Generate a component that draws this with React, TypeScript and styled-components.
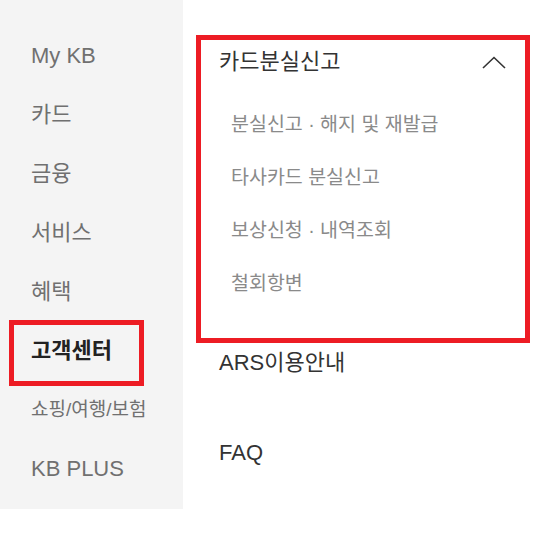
import styled, { createGlobalStyle } from 'styled-components';

const GlobalStyle = createGlobalStyle`
  html, body {
    margin: 0;
    padding: 0;
    background: #ffffff;
  }
  body {
    font-family: "Liberation Sans", "Noto Sans CJK KR", sans-serif;
    line-height: 1;
  }
`;

const ANNOTATION = '#ed1c24';

const Page = styled.div`
  display: flex;
  align-items: flex-start;
  width: 547px;
`;

const Sidebar = styled.nav`
  width: 183px;
  height: 509px;
  box-sizing: border-box;
  padding-top: 26px;
  background: #f4f4f4;
  display: flex;
  flex-direction: column;
`;

const SideItem = styled.div<{ $active?: boolean; $small?: boolean }>`
  position: relative;
  height: 59px;
  display: flex;
  align-items: center;
  padding-left: 31px;
  font-size: ${(p) => (p.$small ? '19px' : '22px')};
  font-weight: ${(p) => (p.$active ? 700 : 400)};
  color: ${(p) => (p.$active ? '#222222' : '#707070')};
  white-space: nowrap;

  ${(p) =>
    p.$active &&
    `
    &::after {
      content: '';
      position: absolute;
      left: 9px;
      right: 39px;
      top: -1px;
      bottom: -6px;
      border: 5px solid ${ANNOTATION};
    }
  `}
`;

const Content = styled.main`
  flex: 1;
  padding: 35px 17px 0 13px;
  display: flex;
  flex-direction: column;
`;

const AccordionBox = styled.section`
  border: 5px solid ${ANNOTATION};
  padding: 0 19px 28px 18px;
`;

const AccordionHeader = styled.div`
  height: 44px;
  display: flex;
  align-items: center;
  justify-content: space-between;
  font-size: 22px;
  color: #333333;
`;

const SubList = styled.ul`
  list-style: none;
  margin: 0;
  padding: 14px 0 0;
`;

const SubItem = styled.li`
  height: 53px;
  display: flex;
  align-items: center;
  padding-left: 12px;
  font-size: 19.5px;
  color: #8a8a8a;
  white-space: nowrap;
`;

const LinkList = styled.div`
  display: flex;
  flex-direction: column;
  gap: 50px;
`;

const LinkRow = styled.div`
  height: 40px;
  display: flex;
  align-items: center;
  padding-left: 23px;
  font-size: 22px;
  color: #333333;
`;

const Chevron = () => (
  <svg width="24" height="13" viewBox="0 0 24 13" fill="none">
    <polyline points="1,12 12,1.5 23,12" stroke="#333333" strokeWidth="1.6" />
  </svg>
);

const menu = [
  { label: 'My KB' },
  { label: '카드' },
  { label: '금융' },
  { label: '서비스' },
  { label: '혜택' },
  { label: '고객센터', active: true },
  { label: '쇼핑/여행/보험', small: true },
  { label: 'KB PLUS' },
];

const subItems = ['분실신고 · 해지 및 재발급', '타사카드 분실신고', '보상신청 · 내역조회', '철회항변'];

export default function App() {
  return (
    <>
      <GlobalStyle />
      <Page>
        <Sidebar>
          {menu.map((m) => (
            <SideItem key={m.label} $active={m.active} $small={m.small}>
              {m.label}
            </SideItem>
          ))}
        </Sidebar>
        <Content>
          <AccordionBox>
            <AccordionHeader>
              <span>카드분실신고</span>
              <Chevron />
            </AccordionHeader>
            <SubList>
              {subItems.map((s) => (
                <SubItem key={s}>{s}</SubItem>
              ))}
            </SubList>
          </AccordionBox>
          <LinkList>
            <LinkRow>ARS이용안내</LinkRow>
            <LinkRow>FAQ</LinkRow>
          </LinkList>
        </Content>
      </Page>
    </>
  );
}
